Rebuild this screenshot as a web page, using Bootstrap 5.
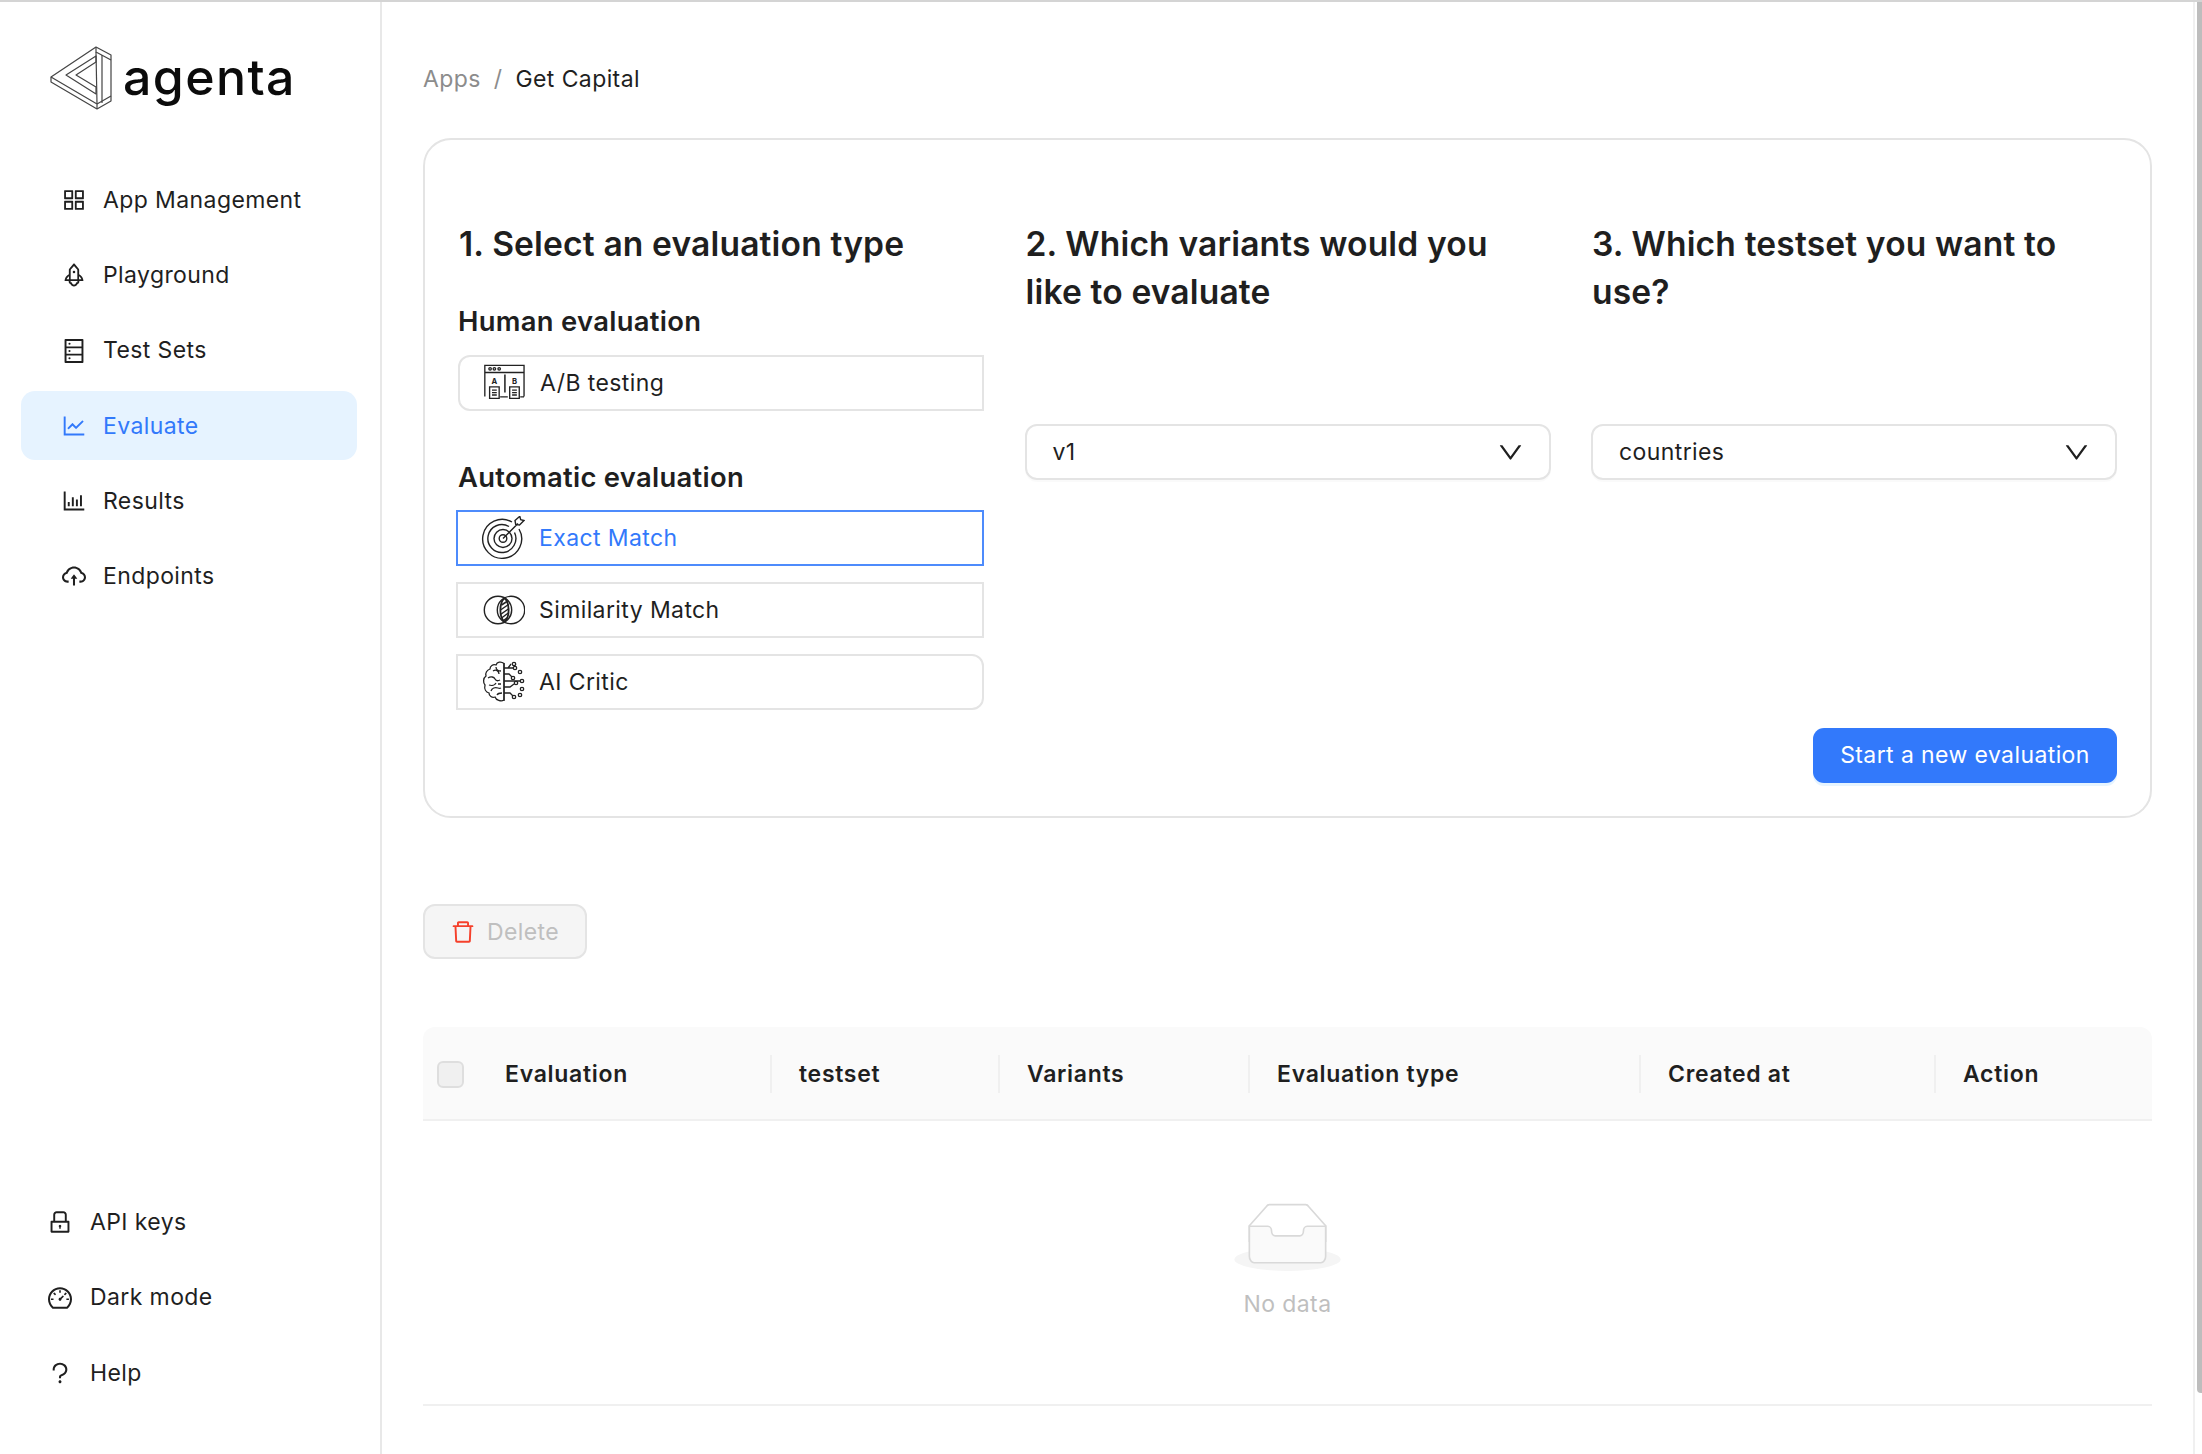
<!DOCTYPE html>
<html lang="en">
<head>
  <meta charset="UTF-8">
  <title>Agenta - Evaluate</title>
  <link href="https://cdn.jsdelivr.net/npm/bootstrap@5.3.0/dist/css/bootstrap.min.css" rel="stylesheet">
  <style>
    html, body { height: 100%; overflow: hidden; }
    body { font-family: Inter, "Liberation Sans", sans-serif; font-size: 23px; letter-spacing: .4px; color: #1f1f1f; background: #fff; }

    .app-shell { height: 1454px; border-top: 2px solid #d4d4d4; }

    /* sidebar */
    .side-bar { width: 382px; flex: none; border-right: 2px solid #e8e8e8; padding: 45px 23px 0 21px; }
    .brand-row { height: 62px; margin-left: 29px; margin-bottom: 56px; gap: 11px; }
    .brand-name { font-size: 50px; font-weight: 500; color: #0b0b0b; line-height: 1; letter-spacing: 1.4px; margin-bottom: 2px; }
    .side-nav { gap: 6.3px; }
    .side-link { height: 69px; padding: 1px 0 0 41px; gap: 17px; border-radius: 14px; color: #1f1f1f; text-decoration: none; }
    .side-link svg { width: 24px; height: 24px; flex: none; fill: currentColor; }
    .side-link.is-active { background: #e6f3ff; color: #3279fb; }
    .side-foot { gap: 6.3px; padding-bottom: 47px; }
    .side-foot .side-link { padding-left: 27px; gap: 18px; }

    /* main column */
    .main-area { padding: 0 41px; min-width: 0; }
    .crumbs { height: 136px; padding-top: 18px; margin: 0; }
    .crumbs a { color: #8c8c8c; text-decoration: none; }
    .crumbs .sep { color: #8c8c8c; margin: 0 13px; }

    .panel-box { height: 680px; border: 2px solid #e4e4e4; border-radius: 28px; padding: 80px 33px 0 33px; position: relative; }
    .step-col { width: 526px; flex: none; }
    .step-title { font-size: 33.6px; font-weight: 600; line-height: 48px; letter-spacing: .15px; margin: 0 0 0 1px; color: #1f1f1f; }
    .group-title { font-size: 27.4px; font-weight: 600; line-height: 38px; letter-spacing: .3px; margin: 34px 0 15px; color: #1f1f1f; }
    .group-title.is-auto { margin: 47px 0 14px; }
    .choice-list { gap: 16px; margin-left: -2px; }
    .choice-item { height: 56px; border: 2px solid #e4e4e4; background: #fff; padding-left: 23px; gap: 14px; line-height: 1; }
    .choice-item svg { width: 44px; height: 44px; flex: none; }
    .choice-item.is-first { border-radius: 12px 0 0 12px; padding-left: 21px; gap: 15px; }
    .choice-item.is-last { border-radius: 0 12px 12px 0; }
    .choice-item.is-on { border-color: #4d8bfc; color: #3279fb; }
    .drop-box { height: 56px; margin-top: 108px; border: 2px solid #e4e4e4; border-radius: 12px; padding: 1px 26px 0; box-shadow: 0 2px 0 rgba(0,0,0,.02); }
    .drop-box svg { width: 25px; height: 25px; fill: #1f1f1f; }
    .start-btn { height: 55px; width: 304px; background: #3279fb; border: none; border-radius: 11px; font-size: 23px; letter-spacing: .4px; color: #fff; padding: 0; box-shadow: 0 3px 0 rgba(5,145,255,.1); }
    .start-row { position: absolute; right: 33px; top: 588px; }

    .btn.trash-btn, .btn.trash-btn:disabled { height: 55px; width: 164px; margin-top: 86px; background: #f5f5f5; border: 2px solid #e4e4e4; border-radius: 12px; color: #bfbfbf; opacity: 1; font-size: 23px; letter-spacing: .4px; gap: 12px; padding: 1px 0 0; }
    .trash-btn svg { width: 24px; height: 24px; fill: #f5402b; }

    .eval-table { width: 100%; margin: 68px 0 0; table-layout: fixed; border-collapse: separate; border-spacing: 0; }
    .eval-table th { height: 94px; background: #fafafa; border-bottom: 2px solid #f0f0f0; font-weight: 600; letter-spacing: .7px; padding: 2px 0 0 29px; position: relative; color: #1f1f1f; }
    .eval-table th:first-child { width: 60px; border-top-left-radius: 12px; padding-left: 14px; }
    .eval-table th:nth-child(2) { width: 287px; padding-left: 22px; }
    .eval-table th:nth-child(3) { width: 228px; }
    .eval-table th:nth-child(4) { width: 250px; }
    .eval-table th:nth-child(5) { width: 391px; }
    .eval-table th:nth-child(6) { width: 295px; }
    .eval-table th:last-child { border-top-right-radius: 12px; }
    .eval-table th + th + th::before { content: ""; position: absolute; left: 0; top: 28px; height: 38px; width: 2px; background: #f0f0f0; }
    .tick-box { display: block; width: 27px; height: 27px; border: 2px solid #dedede; border-radius: 6px; background: #f0f0f0; }
    .empty-cell { height: 285px; border-bottom: 2px solid #f0f0f0; text-align: center; color: #bfbfbf; padding: 0; vertical-align: top; }
    .empty-cell svg { display: block; margin: 82px auto 16px; }

    .scroll-rail { width: 9px; flex: none; border-left: 2px solid #f0f0f0; padding-left: 2px; }
    .scroll-thumb { height: 1391px; background: #bdbdbd; border-bottom-left-radius: 4px; }
  </style>
</head>
<body>
  <div class="app-shell d-flex">

    <!-- Sidebar -->
    <aside class="side-bar d-flex flex-column">
      <div class="brand-row d-flex align-items-center">
        <svg width="62" height="64" viewBox="0 0 62 64" fill="none" stroke="#444" stroke-width="1.2" stroke-linejoin="round">
          <path d="M1 31 46 1 61 9V55L47 63 1 36Z"/>
          <path d="M1 31 47 58V63"/>
          <path d="M47 58 61 50M46 1V6L61 14"/>
          <path d="M46 6 47 58"/>
          <path d="M16 29 46 10V16L26 29 46 41V48Z"/>
          <path d="M52 9V57"/>
        </svg>
        <span class="brand-name">agenta</span>
      </div>
      <nav class="side-nav d-flex flex-column">
        <a class="side-link d-flex align-items-center" href="#">
          <svg viewBox="64 64 896 896"><path d="M464 144H160c-8.8 0-16 7.2-16 16v304c0 8.8 7.2 16 16 16h304c8.8 0 16-7.2 16-16V160c0-8.8-7.2-16-16-16zm-52 268H212V212h200v200zm452-268H560c-8.8 0-16 7.2-16 16v304c0 8.8 7.2 16 16 16h304c8.8 0 16-7.2 16-16V160c0-8.8-7.2-16-16-16zm-52 268H612V212h200v200zM464 544H160c-8.8 0-16 7.2-16 16v304c0 8.8 7.2 16 16 16h304c8.8 0 16-7.2 16-16V560c0-8.8-7.2-16-16-16zm-52 268H212V612h200v200zm452-268H560c-8.8 0-16 7.2-16 16v304c0 8.8 7.2 16 16 16h304c8.8 0 16-7.2 16-16V560c0-8.8-7.2-16-16-16zm-52 268H612V612h200v200z"/></svg>
          App Management
        </a>
        <a class="side-link d-flex align-items-center" href="#">
          <svg viewBox="64 64 896 896"><path d="M864 736c0-111.6-65.4-208-160-252.9V317.3c0-15.1-5.3-29.7-15.1-41.2L536.5 95.4C530.1 87.8 521 84 512 84s-18.1 3.8-24.5 11.4L335.1 276.1a63.97 63.97 0 00-15.1 41.2v165.8C225.4 528 160 624.4 160 736h156.5c-2.3 7.2-3.5 15-3.5 23.8 0 22.1 7.6 43.7 21.4 60.8a97.2 97.2 0 0043.1 30.6c23.1 54 75.6 88.8 134.5 88.8 29.1 0 57.3-8.6 81.4-24.8 23.6-15.8 41.9-37.9 53-64a97 97 0 0043.1-30.5 97.52 97.52 0 0021.4-60.8c0-8.4-1.1-16.4-3.1-23.8H864zM762.3 621.4c9.4 14.6 17 30.3 22.5 46.6H700V558.7a211.6 211.6 0 0162.3 62.7zM388 483.1V318.8l124-147 124 147V668H388V483.1zM239.2 668c5.5-16.3 13.1-32 22.5-46.6 16.3-25.2 37.5-46.5 62.3-62.7V668h-84.8zm388.9 116.2c-5.2 3-11.2 4.2-17.1 3.4l-19.5-2.4-2.8 19.4c-5.4 37.9-38.4 66.5-76.7 66.5-38.3 0-71.3-28.6-76.7-66.5l-2.8-19.5-19.5 2.5a27.8 27.8 0 01-17.1-3.5c-8.7-5-14.1-14.3-14.1-24.4 0-10.6 5.9-19.4 14.6-23.8h231.3c8.8 4.5 14.6 13.3 14.6 23.8-.1 10.2-5.5 19.6-14.1 24.5zM464 400a48 48 0 1096 0 48 48 0 10-96 0z"/></svg>
          Playground
        </a>
        <a class="side-link d-flex align-items-center" href="#">
          <svg viewBox="64 64 896 896"><path d="M832 64H192c-17.7 0-32 14.3-32 32v832c0 17.7 14.3 32 32 32h640c17.7 0 32-14.3 32-32V96c0-17.7-14.3-32-32-32zm-600 72h560v208H232V136zm560 480H232V408h560v208zm0 272H232V680h560v208zM304 240a40 40 0 1080 0 40 40 0 10-80 0zm0 272a40 40 0 1080 0 40 40 0 10-80 0zm0 272a40 40 0 1080 0 40 40 0 10-80 0z"/></svg>
          Test Sets
        </a>
        <a class="side-link is-active d-flex align-items-center" href="#">
          <svg viewBox="64 64 896 896"><path d="M888 792H200V168c0-4.4-3.6-8-8-8h-56c-4.4 0-8 3.6-8 8v688c0 4.4 3.6 8 8 8h752c4.4 0 8-3.6 8-8v-56c0-4.4-3.6-8-8-8zM305.8 637.7c3.1 3.1 8.1 3.1 11.3 0l138.3-137.6L583 628.5c3.1 3.1 8.2 3.1 11.3 0l275.4-275.3c3.1-3.1 3.1-8.2 0-11.3l-39.6-39.6a8.03 8.03 0 00-11.3 0l-230 229.9L461.4 404a8.03 8.03 0 00-11.3 0L266.3 586.7a8.03 8.03 0 000 11.4l39.5 39.6z"/></svg>
          Evaluate
        </a>
        <a class="side-link d-flex align-items-center" href="#">
          <svg viewBox="64 64 896 896"><path d="M888 792H200V168c0-4.4-3.6-8-8-8h-56c-4.4 0-8 3.6-8 8v688c0 4.4 3.6 8 8 8h752c4.4 0 8-3.6 8-8v-56c0-4.4-3.6-8-8-8zm-600-80h56c4.4 0 8-3.6 8-8V560c0-4.4-3.6-8-8-8h-56c-4.4 0-8 3.6-8 8v144c0 4.4 3.6 8 8 8zm152 0h56c4.4 0 8-3.6 8-8V384c0-4.4-3.6-8-8-8h-56c-4.4 0-8 3.6-8 8v320c0 4.4 3.6 8 8 8zm152 0h56c4.4 0 8-3.6 8-8V462c0-4.4-3.6-8-8-8h-56c-4.4 0-8 3.6-8 8v242c0 4.4 3.6 8 8 8zm152 0h56c4.4 0 8-3.6 8-8V304c0-4.4-3.6-8-8-8h-56c-4.4 0-8 3.6-8 8v400c0 4.4 3.6 8 8 8z"/></svg>
          Results
        </a>
        <a class="side-link d-flex align-items-center" href="#">
          <svg viewBox="64 64 896 896"><path d="M518.3 459a8 8 0 00-12.6 0l-112 141.7a7.98 7.98 0 006.3 12.9h73.9V856c0 4.4 3.6 8 8 8h60c4.4 0 8-3.6 8-8V613.7H624c6.7 0 10.4-7.7 6.3-12.9L518.3 459z"/><path d="M811.4 366.7C765.6 245.9 648.9 160 512.2 160S258.8 245.8 213 366.6C127.3 389.1 64 467.2 64 560c0 110.5 89.5 200 199.9 200H304c4.4 0 8-3.6 8-8v-60c0-4.4-3.6-8-8-8h-40.1c-33.7 0-65.4-13.4-89-37.7-23.5-24.2-36-56.8-34.9-90.6.9-26.4 9.9-51.2 26.2-72.1 16.7-21.3 40.1-36.8 66.1-43.7l37.9-9.9 13.9-36.6c8.6-22.8 20.6-44.1 35.7-63.4a245.6 245.6 0 0152.4-49.9c41.1-28.9 89.5-44.2 140-44.2s98.9 15.3 140 44.2c19.9 14 37.5 30.8 52.4 49.9 15.1 19.3 27.1 40.7 35.7 63.4l13.8 36.5 37.8 10C846.1 454.5 884 503.8 884 560c0 33.1-12.9 64.3-36.3 87.7a123.07 123.07 0 01-87.6 36.3H720c-4.4 0-8 3.6-8 8v60c0 4.4 3.6 8 8 8h40.1C870.5 760 960 670.5 960 560c0-92.7-63.1-170.7-148.6-193.3z"/></svg>
          Endpoints
        </a>
      </nav>
      <div class="side-foot d-flex flex-column mt-auto">
        <a class="side-link d-flex align-items-center" href="#">
          <svg viewBox="64 64 896 896"><path d="M832 464h-68V240c0-70.7-57.3-128-128-128H388c-70.7 0-128 57.3-128 128v224h-68c-17.7 0-32 14.3-32 32v384c0 17.7 14.3 32 32 32h640c17.7 0 32-14.3 32-32V496c0-17.7-14.3-32-32-32zM332 240c0-30.9 25.1-56 56-56h248c30.9 0 56 25.1 56 56v224H332V240zm460 600H232V536h560v304zM484 701v53c0 4.4 3.6 8 8 8h40c4.4 0 8-3.6 8-8v-53a48.01 48.01 0 10-56 0z"/></svg>
          API keys
        </a>
        <a class="side-link d-flex align-items-center" href="#">
          <svg viewBox="64 64 896 896"><path d="M924.8 385.6a446.7 446.7 0 00-96-142.4 446.7 446.7 0 00-142.4-96C631.1 123.8 572.5 112 512 112s-119.1 11.8-174.4 35.2a446.7 446.7 0 00-142.4 96 446.7 446.7 0 00-96 142.4C75.8 440.9 64 499.5 64 560c0 132.7 58.3 257.7 159.9 343.1l1.7 1.4c5.8 4.8 13.1 7.5 20.6 7.5h531.7c7.5 0 14.8-2.7 20.6-7.5l1.7-1.4C901.7 817.7 960 692.7 960 560c0-60.5-11.9-119.1-35.2-174.4zM761.4 836H262.6A371.12 371.12 0 01140 560c0-99.4 38.7-192.8 109-263 70.3-70.3 163.7-109 263-109 99.4 0 192.8 38.7 263 109 70.3 70.3 109 163.7 109 263 0 105.6-44.5 205.5-122.6 276zM623.5 421.5a8.03 8.03 0 00-11.3 0L527.7 506c-18.7-5-39.4-.2-54.1 14.5a55.95 55.95 0 000 79.2 55.95 55.95 0 0079.2 0 55.87 55.87 0 0014.5-54.1l84.5-84.5c3.1-3.1 3.1-8.2 0-11.3l-28.3-28.3zM490 320h44c4.4 0 8-3.6 8-8v-80c0-4.4-3.6-8-8-8h-44c-4.4 0-8 3.6-8 8v80c0 4.4 3.6 8 8 8zm260 218v44c0 4.4 3.6 8 8 8h80c4.4 0 8-3.6 8-8v-44c0-4.4-3.6-8-8-8h-80c-4.4 0-8 3.6-8 8zm12.7-197.2l-31.1-31.1a8.03 8.03 0 00-11.3 0l-56.6 56.6a8.03 8.03 0 000 11.3l31.1 31.1c3.1 3.1 8.2 3.1 11.3 0l56.6-56.6c3.1-3.1 3.1-8.2 0-11.3zm-458.6-31.1a8.03 8.03 0 00-11.3 0l-31.1 31.1a8.03 8.03 0 000 11.3l56.6 56.6c3.1 3.1 8.2 3.1 11.3 0l31.1-31.1c3.1-3.1 3.1-8.2 0-11.3l-56.6-56.6zM262 530h-80c-4.4 0-8 3.6-8 8v44c0 4.4 3.6 8 8 8h80c4.4 0 8-3.6 8-8v-44c0-4.4-3.6-8-8-8z"/></svg>
          Dark mode
        </a>
        <a class="side-link d-flex align-items-center" href="#">
          <svg viewBox="64 64 896 896"><path d="M764 280.9c-14-30.6-33.9-58.1-59.3-81.6C653.1 151.4 584.6 125 512 125s-141.1 26.4-192.7 74.2c-25.4 23.6-45.3 51-59.3 81.7-14.6 32-22 65.9-22 100.9v27c0 6.2 5 11.2 11.2 11.2h54c6.2 0 11.2-5 11.2-11.2v-27c0-99.5 88.6-180.4 197.6-180.4s197.6 80.9 197.6 180.4c0 40.8-14.5 79.2-42 111.2-27.2 31.7-65.6 54.4-108.1 64-24.3 5.5-46.2 19.2-61.7 38.8a110.85 110.85 0 00-23.9 68.6v31.4c0 6.2 5 11.2 11.2 11.2h54c6.2 0 11.2-5 11.2-11.2v-31.4c0-15.7 10.9-29.5 26-32.9 58.4-13.2 111.4-44.7 149.3-88.7 19.1-22.3 34-47.1 44.3-74 10.7-27.9 16.1-57.2 16.1-87 0-35-7.4-69-22-100.9zM512 787c-30.9 0-56 25.1-56 56s25.1 56 56 56 56-25.1 56-56-25.1-56-56-56z"/></svg>
          Help
        </a>
      </div>
    </aside>

    <!-- Main -->
    <main class="main-area flex-grow-1">
      <div class="crumbs d-flex align-items-center">
        <a href="#">Apps</a><span class="sep">/</span><span>Get Capital</span>
      </div>

      <section class="panel-box">
        <div class="d-flex justify-content-between">
          <div class="step-col">
            <h2 class="step-title">1. Select an evaluation type</h2>
            <h3 class="group-title">Human evaluation</h3>
            <div class="choice-item is-first d-flex align-items-center">
              <svg viewBox="0 0 46 44" fill="none" stroke="#222" stroke-width="1.4">
                <path d="M4 36V3.500H45V36M4 11H45M20 36.500H28M41 36.500H45"/>
                <circle cx="9.500" cy="7.200" r="1.300"/><circle cx="14" cy="7.200" r="1.300"/><circle cx="19" cy="7.200" r="1.300"/>
                <path d="M25 13V32" stroke-width="1.600"/>
                <text x="14" y="23" font-family="Inter, sans-serif" font-size="8" font-weight="700" fill="#222" stroke="none" text-anchor="middle" letter-spacing="0">A</text>
                <text x="35" y="23" font-family="Inter, sans-serif" font-size="8" font-weight="700" fill="#222" stroke="none" text-anchor="middle" letter-spacing="0">B</text>
                <path d="M9 26H19V38H9ZM30 26H40V38H30ZM11.500 29.500H16.500M11.500 32H16.500M11.500 34.500H16.500M32.500 29.500H37.500M32.500 32H37.500M32.500 34.500H37.500" fill="#fff"/>
              </svg>
              A/B testing
            </div>
            <h3 class="group-title is-auto">Automatic evaluation</h3>
            <div class="choice-list d-flex flex-column">
              <div class="choice-item is-on d-flex align-items-center">
                <svg viewBox="0 0 44 44" fill="none" stroke="#222" stroke-width="1.4">
                  <path d="M31 6A19.500 19.500 0 1 0 38 13"/>
                  <path d="M28 10.500A14 14 0 1 0 33.500 16.500"/>
                  <circle cx="22" cy="22.500" r="9"/><circle cx="22" cy="22.500" r="3.800"/>
                  <path d="M22 22.500 37 7.500M34 4.500l.7 3.800 3.800.7 4.500-4.500-3.300-.9-.9-3.300z"/>
                </svg>
                Exact Match
              </div>
              <div class="choice-item d-flex align-items-center">
                <svg viewBox="0 0 44 44" fill="none" stroke="#222" stroke-width="1.4">
                  <circle cx="17" cy="22" r="13.700"/><circle cx="30" cy="22" r="13.700"/>
                  <path d="M23.500 10C29 15 29 29 23.500 34C18 29 18 15 23.500 10Z" fill="#fff" stroke-width="1.800"/>
                  <path d="M20.500 17 26 13.500M19.500 22 27.500 16.500M19.500 26.500 28 20.500M20.500 30 28 24.500M22.500 32.500 26.500 29.500" stroke-width="1.500"/>
                </svg>
                Similarity Match
              </div>
              <div class="choice-item is-last d-flex align-items-center">
                <svg viewBox="0 0 44 44" fill="none" stroke="#222" stroke-width="1.300">
                  <path d="M23 3.500C20 1 16 2 15 5 12 4 9 6 9 9 6 10 4 13 5 16 2 18 2 23 4 25 3 29 5 32 8 33 8 36 11 38 14 37 15 40 20 42 23 40Z"/>
                  <path d="M23 3V41M12 11c3-2 6 0 6 3M15 7c0 2 2 4 5 4M7 18c3-2 6-1 7 1s3 2 5 1M8 25c3 1 6 0 7-2M10 31c1-3 4-4 7-3 1 .5 2 .5 3 0M16 35c1-2 3-2 5-2M17 24h3"/>
                  <path d="M23 8h9M23 14h5l3 3M23 21h10l6 0M23 27h6l4-3M23 33h6l3 3M27 8l3-4"/>
                  <circle cx="33" cy="4" r="1.700"/><circle cx="34" cy="8" r="1.700"/><circle cx="39" cy="12" r="1.700"/><circle cx="32" cy="18" r="1.700"/><circle cx="41" cy="21" r="1.700"/><circle cx="35" cy="23" r="1.700"/><circle cx="41" cy="29" r="1.700"/><circle cx="33" cy="37" r="1.700"/><circle cx="39" cy="35" r="1.700"/>
                </svg>
                AI Critic
              </div>
            </div>
          </div>

          <div class="step-col">
            <h2 class="step-title">2. Which variants would you like to evaluate</h2>
            <div class="drop-box d-flex align-items-center justify-content-between">
              <span>v1</span>
              <svg viewBox="64 64 896 896"><path d="M884 256h-75c-5.1 0-9.9 2.5-12.9 6.6L512 654.2 227.9 262.6c-3-4.1-7.8-6.6-12.9-6.6h-75c-6.5 0-10.3 7.4-6.5 12.7l352.6 486.1c12.8 17.6 39 17.6 51.7 0l352.6-486.1c3.9-5.3.1-12.7-6.4-12.7z"/></svg>
            </div>
          </div>

          <div class="step-col">
            <h2 class="step-title">3. Which testset you want to use?</h2>
            <div class="drop-box d-flex align-items-center justify-content-between">
              <span>countries</span>
              <svg viewBox="64 64 896 896"><path d="M884 256h-75c-5.1 0-9.9 2.5-12.9 6.6L512 654.2 227.9 262.6c-3-4.1-7.8-6.6-12.9-6.6h-75c-6.5 0-10.3 7.4-6.5 12.7l352.6 486.1c12.8 17.6 39 17.6 51.7 0l352.6-486.1c3.9-5.3.1-12.7-6.4-12.7z"/></svg>
            </div>
          </div>
        </div>
        <div class="start-row">
          <button class="btn start-btn" type="button">Start a new evaluation</button>
        </div>
      </section>

      <button class="btn trash-btn d-flex align-items-center justify-content-center" type="button" disabled>
        <svg viewBox="64 64 896 896"><path d="M360 184h-8c4.4 0 8-3.6 8-8v8h304v-8c0 4.4 3.6 8 8 8h-8v72h72v-80c0-35.3-28.7-64-64-64H352c-35.3 0-64 28.7-64 64v80h72v-72zm504 72H160c-17.7 0-32 14.3-32 32v32c0 4.4 3.6 8 8 8h60.4l24.7 523c1.6 34.1 29.8 61 63.9 61h454c34.2 0 62.3-26.8 63.9-61l24.7-523H888c4.4 0 8-3.6 8-8v-32c0-17.7-14.3-32-32-32zM731.3 840H292.7l-24.2-512h487l-24.2 512z"/></svg>
        Delete
      </button>

      <table class="eval-table">
        <thead>
          <tr>
            <th><span class="tick-box"></span></th>
            <th>Evaluation</th>
            <th>testset</th>
            <th>Variants</th>
            <th>Evaluation type</th>
            <th>Created at</th>
            <th>Action</th>
          </tr>
        </thead>
        <tbody>
          <tr>
            <td class="empty-cell" colspan="7">
              <svg width="107" height="68" viewBox="0 0 64 41"><g transform="translate(0 1)" fill="none" fill-rule="evenodd"><ellipse fill="#f5f5f5" cx="32" cy="33" rx="32" ry="7"/><g fill-rule="nonzero" stroke="#d9d9d9"><path d="M55 12.76L44.854 1.258C44.367.474 43.656 0 42.907 0H21.093c-.749 0-1.46.474-1.947 1.257L9 12.761V22h46v-9.24z"/><path d="M41.613 15.931c0-1.605.994-2.93 2.227-2.931H55v18.137C55 33.26 53.68 35 52.05 35h-40.1C10.32 35 9 33.259 9 31.137V13h11.16c1.233 0 2.227 1.323 2.227 2.928v.022c0 1.605 1.005 2.901 2.237 2.901h14.752c1.232 0 2.237-1.308 2.237-2.913v-.007z" fill="#fafafa"/></g></g></svg>
              No data
            </td>
          </tr>
        </tbody>
      </table>
    </main>

    <div class="scroll-rail"><div class="scroll-thumb"></div></div>
  </div>

  <script src="https://cdn.jsdelivr.net/npm/bootstrap@5.3.0/dist/js/bootstrap.bundle.min.js"></script>
</body>
</html>
